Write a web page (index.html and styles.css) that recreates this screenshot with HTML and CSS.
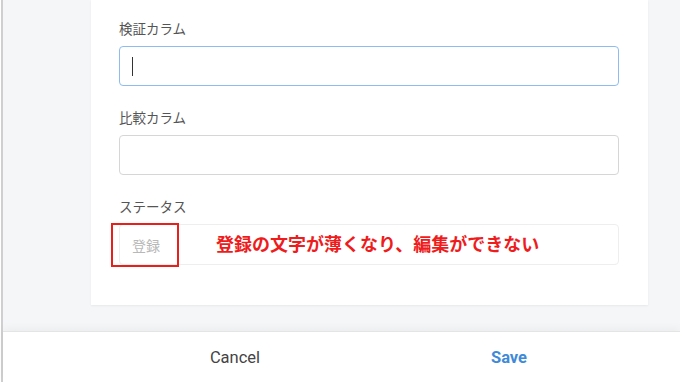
FILE: index.html
```html
<!DOCTYPE html>
<html lang="ja">
<head>
<meta charset="utf-8">
<link rel="stylesheet" href="styles.css">
</head>
<body>
<div class="page">
  <main class="main">
    <section class="card">
      <div class="field">
        <label class="label">検証カラム</label>
        <div class="input input-focus"><span class="caret"></span></div>
      </div>
      <div class="field">
        <label class="label">比較カラム</label>
        <div class="input"></div>
      </div>
      <div class="field status-field">
        <label class="label">ステータス</label>
        <div class="input input-disabled"><span class="disabled-text">登録</span></div>
        <div class="highlight"></div>
        <div class="note">登録の文字が薄くなり、編集ができない</div>
      </div>
    </section>
  </main>
  <footer class="footer">
    <div class="actions">
      <button class="btn btn-cancel">Cancel</button>
      <button class="btn btn-save">Save</button>
    </div>
  </footer>
</div>
</body>
</html>
```

FILE: styles.css
```css
* { box-sizing: border-box; }
html, body { margin: 0; padding: 0; }
body {
  width: 680px;
  height: 382px;
  overflow: hidden;
  background: #ffffff;
  font-family: "Noto Sans CJK JP", "Noto Sans", sans-serif;
}
.page {
  margin-left: 1px;
  border-left: 2px solid #cfcfcf;
  height: 382px;
  display: flex;
  flex-direction: column;
}
.main {
  height: 331px;
  background: #f5f6f8;
  padding-left: 88px;
}
.card {
  width: 557px;
  height: 305px;
  background: #ffffff;
  box-shadow: 0 1px 2px rgba(0,0,0,0.06);
  padding: 18px 29px 0 28px;
  display: flex;
  flex-direction: column;
  gap: 21px;
}
.field {
  display: flex;
  flex-direction: column;
  gap: 8px;
}
.label {
  font-size: 13.5px;
  line-height: 20px;
  color: #555555;
}
.input {
  height: 40px;
  border: 1.5px solid #d6d6d6;
  border-radius: 4px;
  background: #fff;
  display: flex;
  align-items: center;
  padding-left: 12px;
}
.input-focus {
  border: 1.5px solid #8dbdf0;
}
.caret {
  width: 1px;
  height: 19px;
  background: #333;
}
.status-field {
  position: relative;
}
.input-disabled {
  border: 1px solid #eeeeee;
  height: 41px;
}
.disabled-text {
  font-size: 14px;
  color: #b8b8b8;
}
.highlight {
  position: absolute;
  left: -8px;
  top: 27px;
  width: 68px;
  height: 44px;
  border: 2px solid #e8201c;
}
.note {
  position: absolute;
  left: 97px;
  top: 35px;
  font-size: 18px;
  line-height: 24px;
  font-weight: 700;
  color: #ee1c1c;
  white-space: nowrap;
}
.footer {
  flex: 1;
  background: #fff;
  border-top: 1px solid #e4e4e4;
  box-shadow: 0 -3px 8px rgba(0,0,0,0.04);
  padding-left: 98px;
  display: flex;
  align-items: center;
}
.actions {
  width: 544px;
  display: grid;
  grid-template-columns: 1fr 1fr;
}
.btn {
  border: 0;
  background: none;
  font-family: Roboto, "Liberation Sans", sans-serif;
  font-size: 16.5px;
  padding: 0;
  text-align: center;
}
.btn-cancel { color: #444444; margin-left: -4px; }
.btn-save { color: #3f8ad8; font-weight: 700; }
```
